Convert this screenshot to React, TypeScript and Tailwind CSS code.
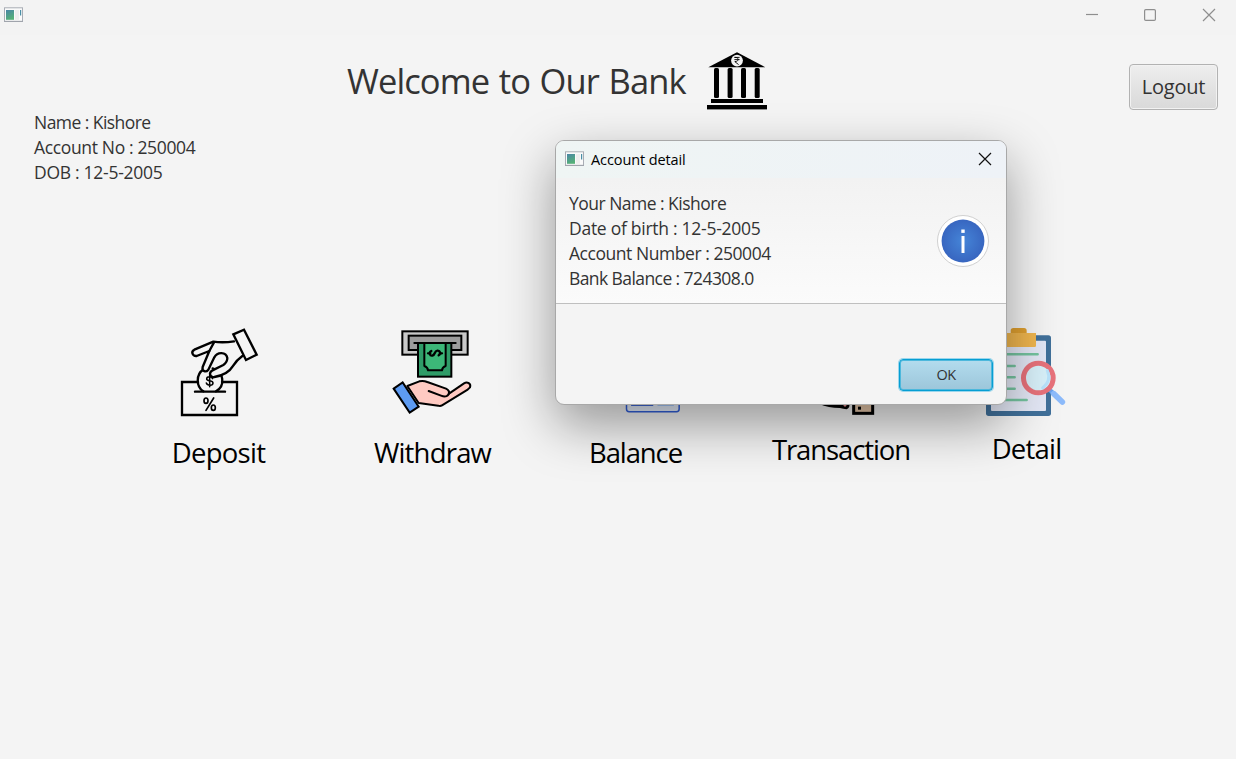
import React from "react";

const WindowIcon = () => (
  <svg width="19" height="16" viewBox="0 0 19 16" className="block shrink-0">
    <defs>
      <linearGradient id="pane" x1="0" y1="0" x2="0.4" y2="1">
        <stop offset="0" stopColor="#4a86a6" />
        <stop offset="1" stopColor="#55b078" />
      </linearGradient>
    </defs>
    <rect x="0.5" y="0.8" width="18" height="13.5" fill="#fafafa" stroke="#a9adb5" />
    <path d="M0 14.5H19" stroke="#a0a4ac" strokeWidth="1" />
    <rect x="2" y="3" width="8" height="9.8" fill="url(#pane)" />
    <rect x="11" y="3" width="4" height="9.8" fill="#eeeeee" />
    <path d="M16.6 3V8.5" stroke="#4a8fa6" strokeWidth="1.2" />
  </svg>
);

const BankIcon = () => (
  <svg width="60" height="58" viewBox="707 52 60 58" className="block shrink-0">
    <path d="M737 52.3 L765.3 67.2 H708.3Z" />
    <circle cx="737" cy="60.6" r="5.9" fill="#f4f4f4" />
    <path
      d="M734.4 57.4H739.6M734.4 59.6H739.6M734.6 57.4C739.4 57 739.4 61.6 734.8 61.6L738.6 64.6"
      fill="none"
      stroke="#000"
      strokeWidth="0.9"
    />
    <rect x="714" y="68" width="5" height="30" rx="1.5" />
    <rect x="727.6" y="68" width="5" height="30" rx="1.5" />
    <rect x="741" y="68" width="5" height="30" rx="1.5" />
    <rect x="754.7" y="68" width="5" height="30" rx="1.5" />
    <rect x="711" y="99" width="52" height="4" />
    <rect x="707" y="105" width="60" height="4.4" />
  </svg>
);

const DepositIcon = () => (
  <svg width="93" height="110" viewBox="172 320 93 110" className="block overflow-visible">
    <g
      transform="translate(160 320) scale(0.33333)"
      fill="none"
      stroke="#000"
      strokeWidth="7"
      strokeLinejoin="round"
      strokeLinecap="round"
    >
      <path d="M114 186H66V285H231V186H186" strokeLinejoin="miter" />
      <path d="M105 215H195" />
      <path d="M130 214C108 200 107 163 131 148M158 145C192 154 197 198 168 214" />
      <path d="M158 176C154 168 140 169 140 177C140 185 159 180 159 189C159 198 142 198 139 189M149 165V200" strokeWidth="4.5" />
      <ellipse cx="138" cy="242" rx="6" ry="8" strokeWidth="5" />
      <ellipse cx="160" cy="263" rx="6" ry="8" strokeWidth="5" />
      <path d="M161 234L138 271" strokeWidth="5" />
      <path
        d="M222 64Q190 69 160 65L103 89C92 95 97 109 110 108L148 93L128 141C125 155 138 158 145 149L163 112C172 95 198 95 202 114C202 126 196 131 190 135L156 152C146 158 149 173 163 171C190 166 207 158 218 139Q231 119 247 108"
        fill="#f4f4f4"
      />
      <path d="M162 67L148 93" />
      <path d="M220 43L252 29L290 104L258 120Z" fill="#f4f4f4" strokeLinejoin="miter" />
    </g>
  </svg>
);

const WithdrawIcon = () => (
  <svg width="117" height="110" viewBox="374 320 117 110" className="block overflow-visible">
    <g
      transform="translate(370 320) scale(0.33333)"
      fill="none"
      stroke="#000"
      strokeWidth="6"
      strokeLinecap="round"
      strokeLinejoin="round"
    >
      <rect x="97" y="34" width="196" height="70" fill="#c9c9c9" strokeLinejoin="miter" />
      <rect x="116" y="47" width="158" height="43" fill="#9c9c9c" strokeLinejoin="miter" />
      <rect x="144" y="69" width="100" height="101" fill="#2f9c68" strokeLinejoin="miter" />
      <path d="M163 70V138Q173 141 174 151H216Q217 141 227 138V70" fill="#3cb778" />
      <path d="M133 69H257" />
      <path d="M174 100H181M209 100H216M184 93C176 97 179 108 187 107C197 104 192 93 202 92C211 91 213 102 206 106" strokeWidth="7" />
      <path
        d="M112 198L148 184Q160 181 172 186L228 206Q239 211 237 221L282 190C292 184 304 191 300 202L293 209L216 256Q211 259 205 257L146 249Z"
        fill="#ffcac2"
      />
      <path d="M176 213L213 227C226 232 237 229 237 217" />
      <path d="M71 206L98 187L146 260L119 278Z" fill="#5d9bf2" strokeLinejoin="miter" />
    </g>
  </svg>
);

const BalanceIcon = () => (
  <svg width="93" height="110" viewBox="589 320 93 110" className="block overflow-visible">
    <g transform="translate(540 360) scale(0.33333)">
      <rect x="259.500" y="20" width="158" height="135" rx="8" fill="#e9f1ff" stroke="#3260dc" strokeWidth="4.500" />
      <rect x="275" y="95" width="63" height="41" fill="#f0a070" stroke="#3260dc" strokeWidth="3.500" />
      <rect x="352" y="125" width="50" height="13" rx="2" fill="#a8ccff" />
    </g>
  </svg>
);

const TransactionIcon = () => (
  <svg width="138" height="110" viewBox="772 320 138 110" className="block overflow-visible">
    <g transform="translate(760 350) scale(0.33333)">
      <path d="M178 158Q205 164 238 163L250 154L269 156Q271 172 260 178Q250 176 240 174Q205 174 178 162Z" />
      <circle cx="255" cy="166" r="4" fill="#f29a9a" />
      <rect x="281" y="110" width="57" height="80" fill="#e9caac" stroke="#000" strokeWidth="9" />
      <rect x="294" y="170" width="9" height="9" />
    </g>
  </svg>
);

const DetailIcon = () => (
  <svg width="69" height="110" viewBox="992 320 69 110" className="block overflow-visible">
    <g transform="translate(960 310) scale(0.33333)" fill="none" strokeLinecap="round">
      <rect x="78" y="76" width="195" height="242" rx="8" fill="#40709a" />
      <rect x="93" y="92" width="165" height="211" rx="3" fill="#e4e8f6" />
      <path d="M152 72V62Q152 54 160 54H192Q200 54 200 62V72Z" fill="#e0a030" />
      <path d="M120 69H228V107Q228 111 224 111H120Z" fill="#f0b64e" />
      <path
        d="M110 133H233M110 168H164M110 202H164M110 236H164M110 270H200"
        stroke="#75c4a0"
        strokeWidth="7.500"
      />
      <path d="M266 237L284 253" stroke="#6ba3ef" strokeWidth="13" strokeLinecap="butt" />
      <path d="M281 251L307 276" stroke="#8dbbfb" strokeWidth="17" />
      <circle cx="235" cy="204" r="44.500" fill="#d8f1fa" stroke="#e8727b" strokeWidth="15" />
      <path d="M262 182Q275 212 248 234" stroke="#b9e3fb" strokeWidth="9" />
    </g>
  </svg>
);

const actions = [
  { label: "Deposit", Icon: DepositIcon, box: "w-[93px]", text: "pt-1 tracking-[-0.7px]" },
  { label: "Withdraw", Icon: WithdrawIcon, box: "w-[117px] ml-[109px]", text: "pt-1 tracking-[-0.8px]" },
  { label: "Balance", Icon: BalanceIcon, box: "w-[93px] ml-[98px]", text: "pt-1 tracking-[-1.1px]" },
  { label: "Transaction", Icon: TransactionIcon, box: "w-[138px] ml-[90px]", text: "pt-px tracking-[-1.1px]" },
  { label: "Detail", Icon: DetailIcon, box: "w-[69px] ml-[82px]", text: "tracking-[-0.8px]" },
];

const Dialog = () => (
  <section className="absolute left-[555px] top-[140px] flex h-[265px] w-[452px] flex-col overflow-hidden rounded-[9px] border border-[#a8a8a8] bg-[#f4f4f4] shadow-[0_20px_52px_rgba(0,0,0,0.39)]">
    <header className="flex h-[37px] shrink-0 items-center bg-linear-to-r from-[#eff5f4] to-[#eef2f7] pb-px pl-[9px] pr-[14px]">
      <WindowIcon />
      <h2 className="ml-[7px] grow pt-px text-[14.500px] leading-5 tracking-[-0.1px] whitespace-nowrap text-black">
        Account detail
      </h2>
      <svg width="14" height="14" viewBox="0 0 14 14" stroke="#111" strokeWidth="1.200">
        <path d="M1 1L13 13M13 1L1 13" />
      </svg>
    </header>
    <div className="flex h-[126px] shrink-0 items-start justify-between border-b border-[#bfbfbf] bg-linear-to-b from-[#f2f2f2] to-[#fbfbfb] pl-[13px] pr-[16px] pt-[13px]">
      <div className="text-[17.500px] leading-[25px] whitespace-nowrap">
        <p className="tracking-[-0.52px]">Your Name : Kishore</p>
        <p className="tracking-[-0.27px]">Date of birth : 12-5-2005</p>
        <p className="tracking-[-0.45px]">Account Number : 250004</p>
        <p className="tracking-[-0.58px]">Bank Balance : 724308.0</p>
      </div>
      <svg width="54" height="54" viewBox="0 0 54 54" className="mt-[23px]">
        <defs>
          <radialGradient id="info">
            <stop offset="0" stopColor="#4585d8" />
            <stop offset="1" stopColor="#3866c0" />
          </radialGradient>
        </defs>
        <circle cx="27" cy="27" r="25.500" fill="#fff" stroke="#d0d0d0" />
        <circle cx="27" cy="27" r="21.400" fill="url(#info)" />
        <rect x="25.300" y="15.500" width="3.400" height="3.400" fill="#fff" />
        <rect x="25.500" y="22" width="3" height="17" fill="#fff" />
      </svg>
    </div>
    <footer className="flex grow items-end justify-end pb-[13px] pr-[13px]">
      <button className="flex h-8 w-[94px] items-center justify-center rounded-[4px] border border-[#069ed3] bg-linear-to-b from-[#b3dcee] to-[#9cc6da] text-[14.500px] tracking-[-0.6px] shadow-[0_0_0_1px_#9ad6ec,inset_0_0_0_1px_#4db8dc]">
        OK
      </button>
    </footer>
  </section>
);

export default function App() {
  return (
    <main className="relative flex h-[759px] w-[1236px] flex-col overflow-hidden bg-[#f4f4f4] font-['Open_Sans','Noto_Sans',sans-serif] text-[#333]">
      <header className="flex h-[35px] shrink-0 items-start justify-between bg-[#f3f3f3] pl-1 pt-[7px]">
        <WindowIcon />
        <div className="flex gap-[45px] pr-[20px] pt-px text-[#8e8e8e]">
          <svg width="14" height="14" viewBox="0 0 14 14" stroke="currentColor" strokeWidth="1.200">
            <path d="M2 6.500H14" />
          </svg>
          <svg width="14" height="14" viewBox="0 0 14 14" fill="none" stroke="currentColor" strokeWidth="1.200">
            <rect x="1.600" y="1.600" width="10.800" height="10.800" rx="1.200" />
          </svg>
          <svg width="14" height="14" viewBox="0 0 14 14" stroke="currentColor" strokeWidth="1.200">
            <path d="M1 1L13 13M13 1L1 13" />
          </svg>
        </div>
      </header>

      <div className="flex h-[75px] shrink-0 items-start pl-[347px] pr-[18px] pt-[17px]">
        <h1 className="w-[360px] text-[34.500px] leading-[57px] tracking-[-0.9px] [word-spacing:1.5px] whitespace-nowrap">
          Welcome to Our Bank
        </h1>
        <BankIcon />
        <button className="ml-auto mt-[12px] h-[46px] w-[89px] rounded-[4px] border border-[#b2b2b2] bg-linear-to-b from-[#eeeeee] to-[#d9d9d9] text-[20px] tracking-[-0.2px] shadow-[inset_0_0_0_1px_#f2f2f2]">
          Logout
        </button>
      </div>

      <div className="h-[210px] shrink-0 pl-[34px] text-[17.500px] leading-[25px]">
        <p className="tracking-[-0.55px]">Name : Kishore</p>
        <p className="tracking-[-0.35px]">Account No : 250004</p>
        <p className="tracking-[-0.28px]">DOB : 12-5-2005</p>
      </div>

      <nav className="flex pl-[172px]">
        {actions.map(({ label, Icon, box, text }) => (
          <div key={label} className={`flex shrink-0 flex-col items-center ${box}`}>
            <Icon />
            <span className={`text-[27.500px] leading-[38px] whitespace-nowrap text-black ${text}`}>{label}</span>
          </div>
        ))}
      </nav>

      <Dialog />
    </main>
  );
}
